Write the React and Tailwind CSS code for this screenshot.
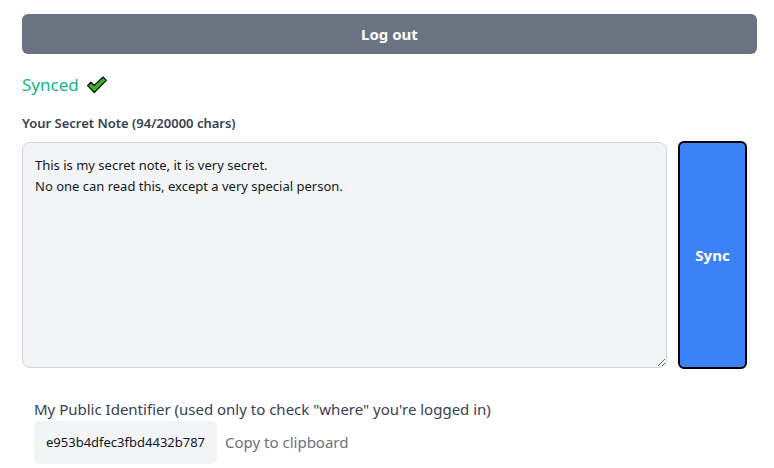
import React, { useState } from 'react';

const note = "This is my secret note, it is very secret.\nNo one can read this, except a very special person.";

const CheckMark = () => (
  <svg width="22" height="18" viewBox="0 0 20 16" className="inline-block">
    <path
      d="M1.5 8.5 L4.5 5.5 L7.5 8.5 L15.5 0.8 L18.5 3.8 L7.5 14.8 Z"
      fill="#2fb62f"
      stroke="#111"
      strokeWidth="1.2"
      strokeLinejoin="round"
    />
  </svg>
);

const App = () => {
  const [text, setText] = useState(note);

  return (
    <div className="w-[774px] h-[468px] bg-white px-[22px] pt-[14px] font-['Noto_Sans',sans-serif] text-[#374151] overflow-hidden">
      <button className="w-[735px] h-10 bg-[#6b7280] text-white font-bold text-[15px] rounded-md">
        Log out
      </button>

      <div className="mt-[19px] flex items-center gap-[7px] text-[#10b981] text-[17px] leading-6">
        Synced <CheckMark />
      </div>

      <div className="mt-[16px] text-[13px] font-semibold text-[#374151] leading-5">
        Your Secret Note ({text.length}/20000 chars)
      </div>

      <div className="mt-[9px] flex">
        <textarea
          value={text}
          onChange={(e) => setText(e.target.value)}
          spellCheck
          className="w-[645px] shrink-0 h-[226px] bg-[#f3f4f6] border border-[#d1d5db] rounded-lg px-3 py-3 text-[13px] leading-[21px] text-[#111827] outline-none"
        />
        <button className="ml-[11px] w-[69px] shrink-0 h-[228px] -mt-px bg-[#3b82f6] border-2 border-black rounded-md text-white font-bold text-[15px]">
          Sync
        </button>
      </div>

      <div className="mt-[28px] ml-3">
        <div className="text-[15px] leading-6 text-[#374151]">
          My Public Identifier (used only to check "where" you're logged in)
        </div>
        <div className="flex items-center gap-2">
          <div className="bg-[#f3f4f6] rounded-md h-[43px] px-3 flex items-center text-[13px] text-[#111827]">
            e953b4dfec3fbd4432b787
          </div>
          <span className="text-[15px] text-[#6b7280]">Copy to clipboard</span>
        </div>
      </div>
    </div>
  );
};

export default App;
